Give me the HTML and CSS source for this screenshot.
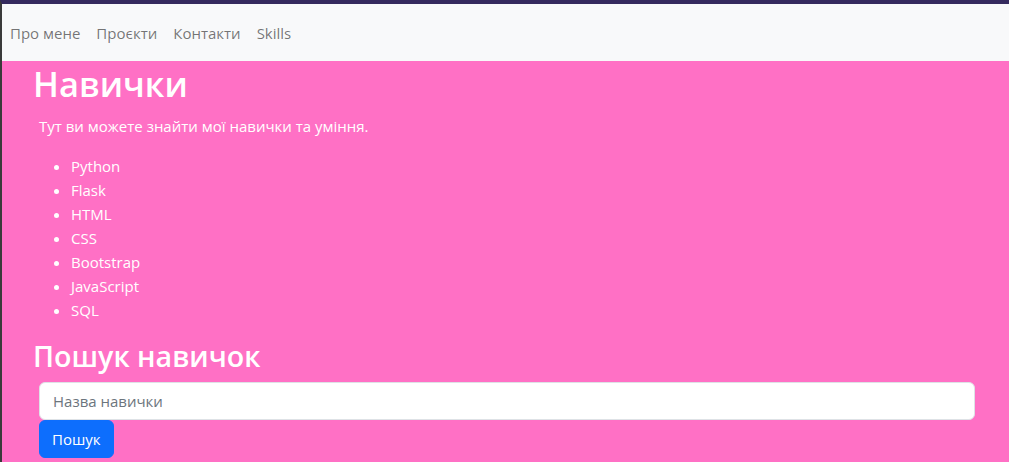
FILE: index.html
```html
<!DOCTYPE html>
<html lang="uk">
<head>
<meta charset="utf-8">
<title>Навички</title>
<link rel="stylesheet" href="styles.css">
</head>
<body>
<div class="frame">
  <nav class="navbar">
    <a class="nav-link" href="#">Про мене</a>
    <a class="nav-link" href="#">Проєкти</a>
    <a class="nav-link" href="#">Контакти</a>
    <a class="nav-link" href="#">Skills</a>
  </nav>
  <main class="content">
    <h1 class="title">Навички</h1>
    <p class="lead">Тут ви можете знайти мої навички та уміння.</p>
    <ul class="skills">
      <li>Python</li>
      <li>Flask</li>
      <li>HTML</li>
      <li>CSS</li>
      <li>Bootstrap</li>
      <li>JavaScript</li>
      <li>SQL</li>
    </ul>
    <h2 class="subtitle">Пошук навичок</h2>
    <form class="search">
      <input class="search-input" type="text" placeholder="Назва навички">
      <button class="search-btn" type="button">Пошук</button>
    </form>
  </main>
</div>
</body>
</html>
```
FILE: styles.css
```css
* { box-sizing: border-box; }
html, body { margin: 0; padding: 0; }
body {
  font-family: "Open Sans", "Noto Sans", sans-serif;
  font-size: 15px;
  line-height: 24px;
  color: #fff;
  background: #ff70c5;
}
.frame {
  min-height: 100vh;
  border-top: 4px solid #352a5e;
  border-left: 2px solid #3a3a3a;
  background: #ff70c5;
}
.navbar {
  display: flex;
  align-items: center;
  gap: 16px;
  height: 57px;
  padding: 0 8px;
  background: #f8f9fa;
}
.nav-link {
  color: rgba(0,0,0,.55);
  text-decoration: none;
}
.content {
  padding: 0 34px 0 31px;
}
.title {
  margin: 0;
  padding-top: 2px;
  font-size: 34.5px;
  font-weight: 600;
  line-height: 1.2;
}
.lead {
  margin: 10px 0 16px 6px;
}
.skills {
  margin: 0 0 17px 6px;
  padding-left: 32px;
}
.subtitle {
  margin: 0;
  font-size: 28.6px;
  font-weight: 600;
  line-height: 33px;
}
.search {
  margin: 10px 0 0 6px;
  display: flex;
  flex-direction: column;
  align-items: flex-start;
}
.search-input {
  width: 100%;
  height: 38px;
  padding: 6px 13px;
  font: inherit;
  color: #212529;
  background: #fff;
  border: 1px solid #dee2e6;
  border-radius: 6px;
}
.search-input::placeholder { color: #6c757d; }
.search-btn {
  height: 38px;
  padding: 6px 12px;
  font: inherit;
  color: #fff;
  background: #0d6efd;
  border: 1px solid #0d6efd;
  border-radius: 6px;
}
```
